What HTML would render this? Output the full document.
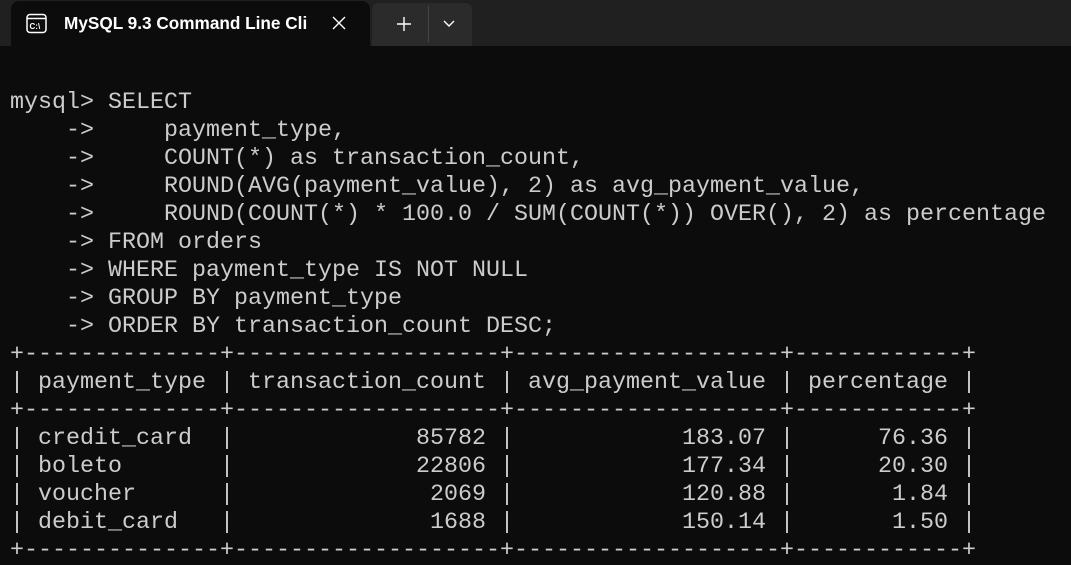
<!DOCTYPE html>
<html><head><meta charset="utf-8"><style>
html,body{margin:0;padding:0;width:1071px;height:556px;overflow:hidden;background:#0c0c0c;}
.bar{position:absolute;left:0;top:0;width:1071px;height:46px;background:#202020;}
.tab{position:absolute;left:11px;top:1px;width:359px;height:45px;background:#0c0c0c;border-radius:8px 8px 0 0;}
.tab .t{position:absolute;left:53px;top:12px;font:600 17.2px "Liberation Sans",sans-serif;color:#fff;white-space:nowrap;}
.btns{position:absolute;left:372px;top:3px;width:100px;height:43px;background:#2b2b2b;border-radius:6px 6px 0 0;}
pre{position:absolute;left:10px;top:89px;margin:0;font:23.33px/28px "Liberation Mono",monospace;color:#cccccc;}
</style></head><body>
<div class="bar">
 <div class="tab">
  <svg style="position:absolute;left:15px;top:12px" width="22" height="22" viewBox="0 0 22 22" fill="none" stroke="#fff" stroke-width="1.5">
   <rect x="1" y="1.5" width="19" height="18" rx="3"/><line x1="1" y1="5.5" x2="20" y2="5.5"/>
   <text x="3.5" y="16" font-family="Liberation Sans" font-size="8" font-weight="bold" fill="#fff" stroke="none">C:\</text>
  </svg>
  <div class="t">MySQL 9.3 Command Line Cli</div>
  <svg style="position:absolute;left:321px;top:15px" width="14" height="14" viewBox="0 0 14 14" stroke="#fff" stroke-width="1.4"><path d="M1 1L13 13M13 1L1 13"/></svg>
 </div>
 <div class="btns">
  <svg style="position:absolute;left:24px;top:13px" width="16" height="16" viewBox="0 0 16 16" stroke="#fff" stroke-width="1.4"><path d="M8 1V15M1 8H15"/></svg>
  <div style="position:absolute;left:56px;top:3px;width:1px;height:36px;background:#444"></div>
  <svg style="position:absolute;left:70px;top:16px" width="14" height="10" viewBox="0 0 14 10" fill="none" stroke="#fff" stroke-width="1.4"><path d="M2 2L7 7L12 2"/></svg>
 </div>
</div>
<pre>mysql&gt; SELECT
    -&gt;     payment_type,
    -&gt;     COUNT(*) as transaction_count,
    -&gt;     ROUND(AVG(payment_value), 2) as avg_payment_value,
    -&gt;     ROUND(COUNT(*) * 100.0 / SUM(COUNT(*)) OVER(), 2) as percentage
    -&gt; FROM orders
    -&gt; WHERE payment_type IS NOT NULL
    -&gt; GROUP BY payment_type
    -&gt; ORDER BY transaction_count DESC;
+--------------+-------------------+-------------------+------------+
| payment_type | transaction_count | avg_payment_value | percentage |
+--------------+-------------------+-------------------+------------+
| credit_card  |             85782 |            183.07 |      76.36 |
| boleto       |             22806 |            177.34 |      20.30 |
| voucher      |              2069 |            120.88 |       1.84 |
| debit_card   |              1688 |            150.14 |       1.50 |
+--------------+-------------------+-------------------+------------+</pre>
</body></html>
